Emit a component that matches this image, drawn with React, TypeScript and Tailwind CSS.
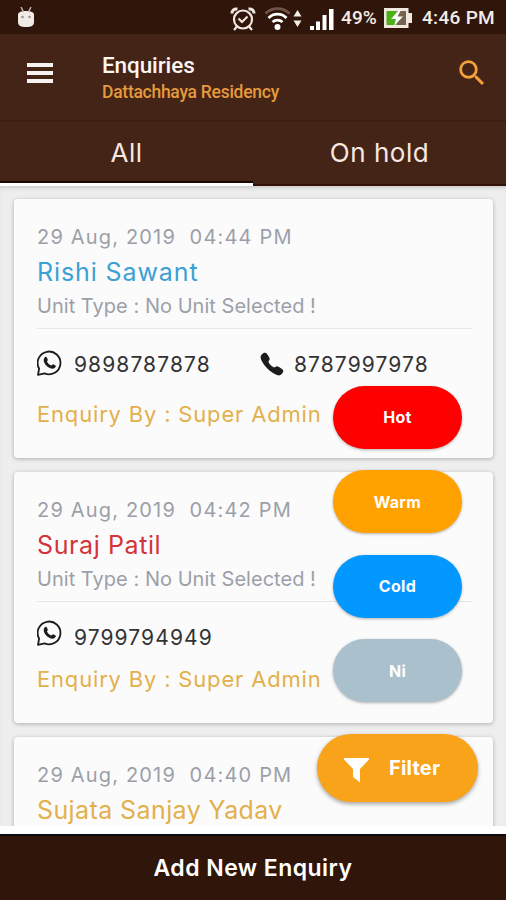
import { IoCall } from "react-icons/io5";
import { MdSearch } from "react-icons/md";

type Enquiry = {
  date: string;
  name: string;
  color: string;
  phones: string[];
  height: string;
  gap: string;
  tracking: string;
};

const enquiries: Enquiry[] = [
  {
    date: "29 Aug, 2019  04:44 PM",
    name: "Rishi Sawant",
    color: "text-[#3ba1d4]",
    phones: ["9898787878", "8787997978"],
    height: "h-[259px]",
    gap: "mt-[22px]",
    tracking: "tracking-[0.9px]",
  },
  {
    date: "29 Aug, 2019  04:42 PM",
    name: "Suraj Patil",
    color: "text-[#d3333a]",
    phones: ["9799794949"],
    height: "h-[251px]",
    gap: "mt-[14px]",
    tracking: "tracking-[0.6px]",
  },
  {
    date: "29 Aug, 2019  04:40 PM",
    name: "Sujata Sanjay Yadav",
    color: "text-[#e3b04b]",
    phones: [],
    height: "h-[251px]",
    gap: "mt-[14px]",
    tracking: "tracking-[0.4px]",
  },
];

const statuses = [
  { label: "Hot", bg: "bg-[#fe0000]" },
  { label: "Warm", bg: "bg-[#ffa200]" },
  { label: "Cold", bg: "bg-[#0398ff]" },
  { label: "Ni", bg: "bg-[#abc0cd]" },
];

function WhatsappIcon({ className }: { className: string }) {
  return (
    <svg width="26" height="26" viewBox="0 0 26 26" fill="none" className={`shrink-0 ${className}`}>
      <path
        d="M1 24.800 2.100 18.500A11.400 11.400 0 1 1 7.500 23.400Z"
        stroke="#1c1c1c"
        strokeWidth="1.8"
        strokeLinejoin="round"
      />
      <path
        d="M7.300 8.100c1-1.700 2-1.600 2.600-.5l.9 2.100c.2.600-.9 1.400-.8 1.900.8 1.800 2.300 3.200 4.200 4 .7 0 1.200-1.500 1.900-1.300l2.500 1.300c.8.600-.4 2.600-2 3-4.600.8-10-4.500-9.900-8.600 0-.7.2-1.300.6-1.900Z"
        fill="#1c1c1c"
      />
    </svg>
  );
}

function StatusBar() {
  return (
    <div className="flex h-[34px] shrink-0 items-center bg-[#30150a] pl-[17px] pr-[10px] pt-[3px] font-['Roboto',sans-serif] text-[19px] font-medium text-[#f4ece8]">
      <svg width="18" height="20" viewBox="0 0 18 20" fill="#f1ebe8" className="mb-[3px]">
        <path d="M1 8c0-3 3-4 8-4s8 1 8 4v7c0 4-3 5-8 5s-8-1-8-5Z" />
        <path d="m4 0 2.500 5M14 0l-2.500 5" stroke="#c5b6ae" strokeWidth="1.500" />
        <circle cx="5.500" cy="10" r="1.300" fill="#9d928c" />
        <circle cx="12.500" cy="10" r="1.300" fill="#9d928c" />
      </svg>
      {/* Alarm */}
      <svg className="ml-auto" width="26" height="24" viewBox="0 0 26 24" fill="none" stroke="#f1e6e0" strokeWidth="2.200">
        <circle cx="13" cy="12.500" r="9" />
        <path d="m8.500 11.500 3.500 3.500 5.500-5.500M7 19.500l-3 3.500M19 19.500l3 3.500" />
        <path d="M2 6.500C2 3.500 4 1.500 7.500 2M24 6.500c0-3-2-5-5.500-4.500" strokeWidth="3" />
      </svg>
      {/* Wifi */}
      <svg className="ml-[8px]" width="38" height="24" viewBox="0 0 38 24" fill="none" strokeWidth="2.700">
        <path d="M1.500 6.500a17 17 0 0 1 24 0" stroke="#6f5549" />
        <path d="M4.500 11a12.500 12.500 0 0 1 18 0M8.500 15a7.500 7.500 0 0 1 10 0" stroke="#fff" />
        <circle cx="13.500" cy="20" r="3" fill="#fff" />
        <path d="m33.500 3 4 6.500h-8ZM33.500 20l4-6.500h-8Z" fill="#f4ece8" />
      </svg>
      {/* Signal */}
      <svg className="ml-[8px]" width="24" height="22" viewBox="0 0 24 22" fill="#fff">
        <path d="M0 18h4v4H0ZM6 13.500h4V22H6ZM12.500 7h4v15h-4ZM19 1h4.500v21H19Z" />
      </svg>
      <span className="ml-[7px] w-[38px] whitespace-nowrap tracking-[0.1px]">49%</span>
      <svg className="mb-[2px] ml-[5px]" width="28" height="20" viewBox="0 0 28 20">
        <path d="M0 0h24.500v5H28v10h-3.500V20H0Z" fill="#f0e8df" />
        <path d="M2.500 3h10v14h-10Z" fill="#4caf17" />
        <path d="M12.500 3H22v14h-9.500Z" fill="#75634f" />
        <path d="M15 2 7 11h5l-2 7 9-9.500h-5.500L17 2Z" fill="#fff" />
      </svg>
      <span className="ml-[10px] w-[74px] whitespace-nowrap tracking-[0.3px]">4:46 PM</span>
    </div>
  );
}

function EnquiryCard({ item }: { item: Enquiry }) {
  return (
    <article
      className={`${item.height} shrink-0 rounded-[4px] bg-[#fbfbfc] pl-[23px] pr-[21px] pt-[24px] shadow-[0_1px_4px_rgba(0,0,0,0.28)]`}
    >
      <p className="whitespace-pre text-[20px] leading-[28px] tracking-[1.180px] text-[#9ba0a8]">{item.date}</p>
      <h2 className={`h-[41px] whitespace-nowrap text-[25px] leading-[43px] ${item.tracking} ${item.color}`}>
        {item.name}
      </h2>
      {item.phones.length > 0 && (
        <>
          <p className="whitespace-pre text-[20px] leading-[28px] tracking-[0.030px] text-[#9ba0a8]">
            Unit Type : No Unit Selected !
          </p>
          <div className="mt-[8px] h-px bg-[#e6e7e8]" />
          <div className="mt-[21px] flex h-[28px] items-center">
            {item.phones.map((phone, i) => (
              <div key={phone} className={i === 0 ? "flex w-[222px] items-center" : "flex items-center"}>
                {i === 0 ? (
                  <WhatsappIcon className={item.phones.length > 1 ? "mb-[2px]" : "mb-[9px]"} />
                ) : (
                  <IoCall className="size-[26px] text-[#1c1c1c]" />
                )}
                <span
                  className={`${i === 0 ? "ml-[11px]" : "ml-[9px]"} pt-px text-[21px] leading-[28px] tracking-[1.100px] text-[#333]`}
                >
                  {phone}
                </span>
              </div>
            ))}
          </div>
          <p className={`${item.gap} whitespace-nowrap text-[22px] leading-[28px] tracking-[0.820px] text-[#e3b04b]`}>
            Enquiry By : Super Admin
          </p>
        </>
      )}
    </article>
  );
}

export default function App() {
  return (
    <div className="relative flex h-[900px] w-[506px] flex-col overflow-hidden bg-white font-['Inter',sans-serif]">
      <StatusBar />

      <header className="flex h-[86px] shrink-0 items-center bg-[#442417] pl-[27px] pr-[17px] font-['Roboto',sans-serif]">
        <div className="flex w-[75px] flex-col gap-[4px] pb-[9px]">
          <span className="h-[4px] w-[26px] bg-[#f7f3f1]" />
          <span className="h-[4px] w-[26px] bg-[#f7f3f1]" />
          <span className="h-[4px] w-[26px] bg-[#f7f3f1]" />
        </div>
        <div className="whitespace-nowrap font-medium">
          <h1 className="text-[22.500px] leading-[28px] tracking-[-0.1px] text-[#fbf6f3]">Enquiries</h1>
          <p className="pt-px text-[17.500px] leading-[24px] tracking-[-0.270px] text-[#e59a3b]">Dattachhaya Residency</p>
        </div>
        <MdSearch className="mb-[9px] ml-auto size-[34px] text-[#f4a13b]" />
      </header>

      <nav className="flex h-[66px] shrink-0 border-t-2 border-[#3c1d10] bg-[#442417] text-center text-[26px] tracking-[0.550px] text-[#f8e8e0]">
        <div className="flex-1 border-b-[3px] border-white pt-[13px] leading-[36px] shadow-[inset_0_-2px_0_#180600]">All</div>
        <div className="flex-1 pt-[13px] leading-[36px] shadow-[inset_0_-2px_0_#351207]">On hold</div>
      </nav>

      <main className="flex h-[640px] shrink-0 flex-col gap-[14px] overflow-hidden bg-[#eeeeee] pl-[14px] pr-[13px] pt-[13px] shadow-[inset_0_4px_4px_-2px_rgba(0,0,0,0.15)]">
        {enquiries.map((item) => (
          <EnquiryCard key={item.name} item={item} />
        ))}
      </main>

      {/* Add button pinned to the bottom */}
      <button className="mt-[8px] h-[66px] shrink-0 border-t-2 border-[#0b0b0f] bg-[#30150a] text-[23px] font-semibold tracking-[0.450px] text-white">
        Add New Enquiry
      </button>

      {/* Floating status menu */}
      <div className="absolute right-[28px] top-[385.500px] flex w-[161px] flex-col items-center gap-[21.500px]">
        {statuses.map((status) => (
          <button
            key={status.label}
            className={`${status.bg} h-[63px] w-[129px] rounded-full text-[16px] font-bold tracking-[0.300px] text-white shadow-[0_1px_3px_rgba(0,0,0,0.3)]`}
          >
            {status.label}
          </button>
        ))}
        <button className="mt-[10px] flex h-[68px] w-[161px] items-center rounded-full bg-[#f9a31a] pl-[27px] text-[20px] font-bold tracking-[0.200px] text-white shadow-[0_2px_4px_rgba(0,0,0,0.35)]">
          <svg width="25" height="26" viewBox="0 0 25 26" fill="#fff" className="mr-[20px] mt-[4px]">
            <path d="M0 1h25v1.500L16 12v13.500L9 20v-8L0 2.500Z" />
          </svg>
          Filter
        </button>
      </div>
    </div>
  );
}
